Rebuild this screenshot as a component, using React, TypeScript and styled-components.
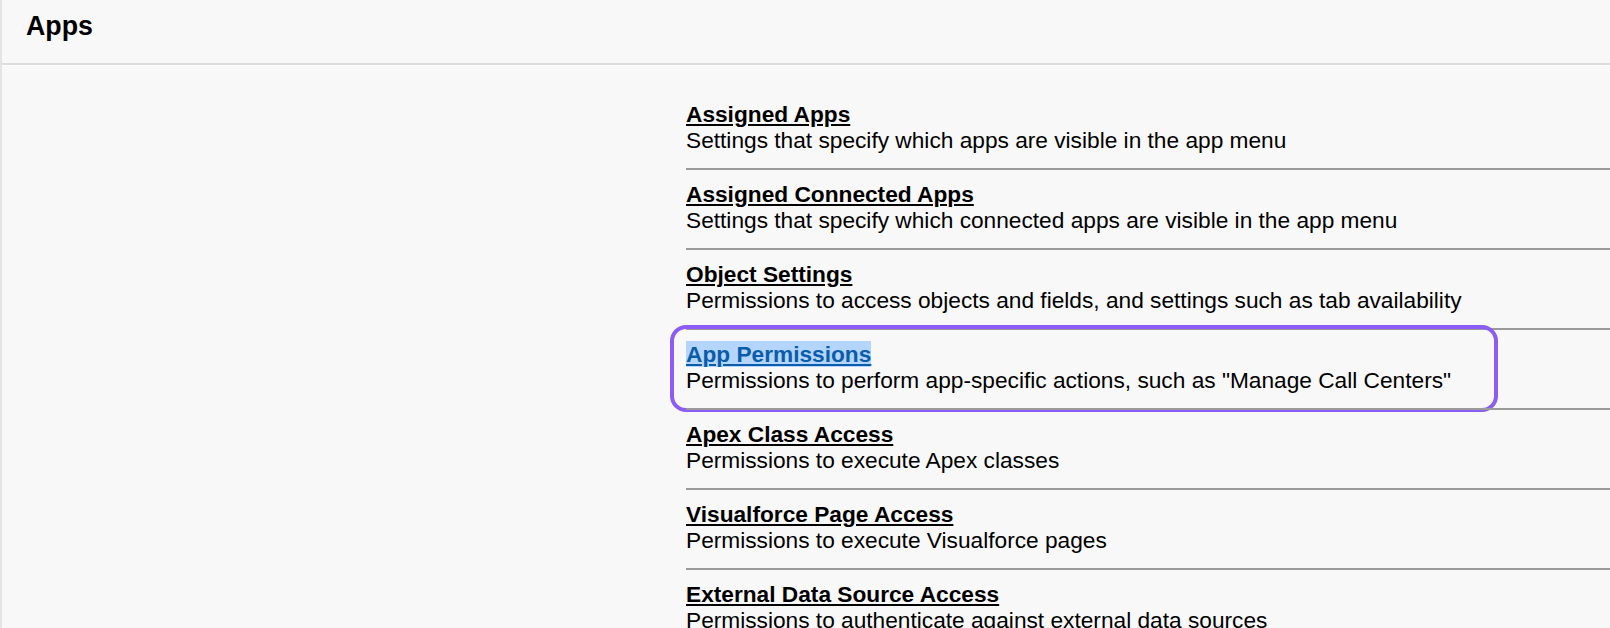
import React from "react";
import styled, { createGlobalStyle } from "styled-components";

const GlobalStyle = createGlobalStyle`
  html, body {
    margin: 0;
    padding: 0;
    background: #f8f8f8;
  }
  body {
    font-family: "Liberation Sans", Arial, Helvetica, sans-serif;
    color: #000;
  }
`;

type Item = {
  title: string;
  description: string;
  highlighted?: boolean;
};

const items: Item[] = [
  {
    title: "Assigned Apps",
    description: "Settings that specify which apps are visible in the app menu",
  },
  {
    title: "Assigned Connected Apps",
    description:
      "Settings that specify which connected apps are visible in the app menu",
  },
  {
    title: "Object Settings",
    description:
      "Permissions to access objects and fields, and settings such as tab availability",
  },
  {
    title: "App Permissions",
    description:
      'Permissions to perform app-specific actions, such as "Manage Call Centers"',
    highlighted: true,
  },
  {
    title: "Apex Class Access",
    description: "Permissions to execute Apex classes",
  },
  {
    title: "Visualforce Page Access",
    description: "Permissions to execute Visualforce pages",
  },
  {
    title: "External Data Source Access",
    description: "Permissions to authenticate against external data sources",
  },
];

function App() {
  return (
    <>
      <GlobalStyle />
      <Page>
        <Header>
          <Heading>Apps</Heading>
        </Header>
        <Body>
          <List>
            {items.map((item) => (
              <Row key={item.title}>
                <Title href="#" $selected={item.highlighted}>
                  {item.title}
                </Title>
                <Description>{item.description}</Description>
                {item.highlighted && <Callout />}
              </Row>
            ))}
          </List>
        </Body>
      </Page>
    </>
  );
}

export default App;

const Page = styled.div`
  height: 628px;
  overflow: hidden;
  border-left: 2px solid #e4e4e4;
  background: #f8f8f8;
`;

const Header = styled.header`
  box-sizing: border-box;
  height: 65px;
  padding: 11px 0 0 24px;
  border-bottom: 2px solid #dcdcdc;
  box-shadow: 0 1px 0 #ffffff;
`;

const Heading = styled.h1`
  margin: 0;
  font-size: 26.8px;
  line-height: 30px;
  font-weight: 700;
`;

const Body = styled.main`
  padding: 25px 0 0 684px;
`;

const List = styled.div`
  display: flex;
  flex-direction: column;
`;

const Row = styled.div`
  position: relative;
  display: flex;
  flex-direction: column;
  align-items: flex-start;
  padding: 11px 0 15px;
  border-top: 2px solid #9a9a9a;

  &:first-child {
    border-top: none;
  }
`;

const Title = styled.a<{ $selected?: boolean }>`
  font-size: 22.7px;
  line-height: 26px;
  font-weight: 700;
  color: ${(p) => (p.$selected ? "#0b5cab" : "#000")};
  background: ${(p) => (p.$selected ? "#b4d5fd" : "transparent")};
  text-decoration: underline;
  text-underline-offset: 2px;
`;

const Description = styled.div`
  font-size: 22.7px;
  line-height: 26px;
  color: #000;
`;

const Callout = styled.div`
  position: absolute;
  left: -16px;
  top: -5px;
  width: 828px;
  height: 87px;
  box-sizing: border-box;
  border: 4px solid #8b5cf6;
  border-radius: 16px;
  pointer-events: none;
`;
